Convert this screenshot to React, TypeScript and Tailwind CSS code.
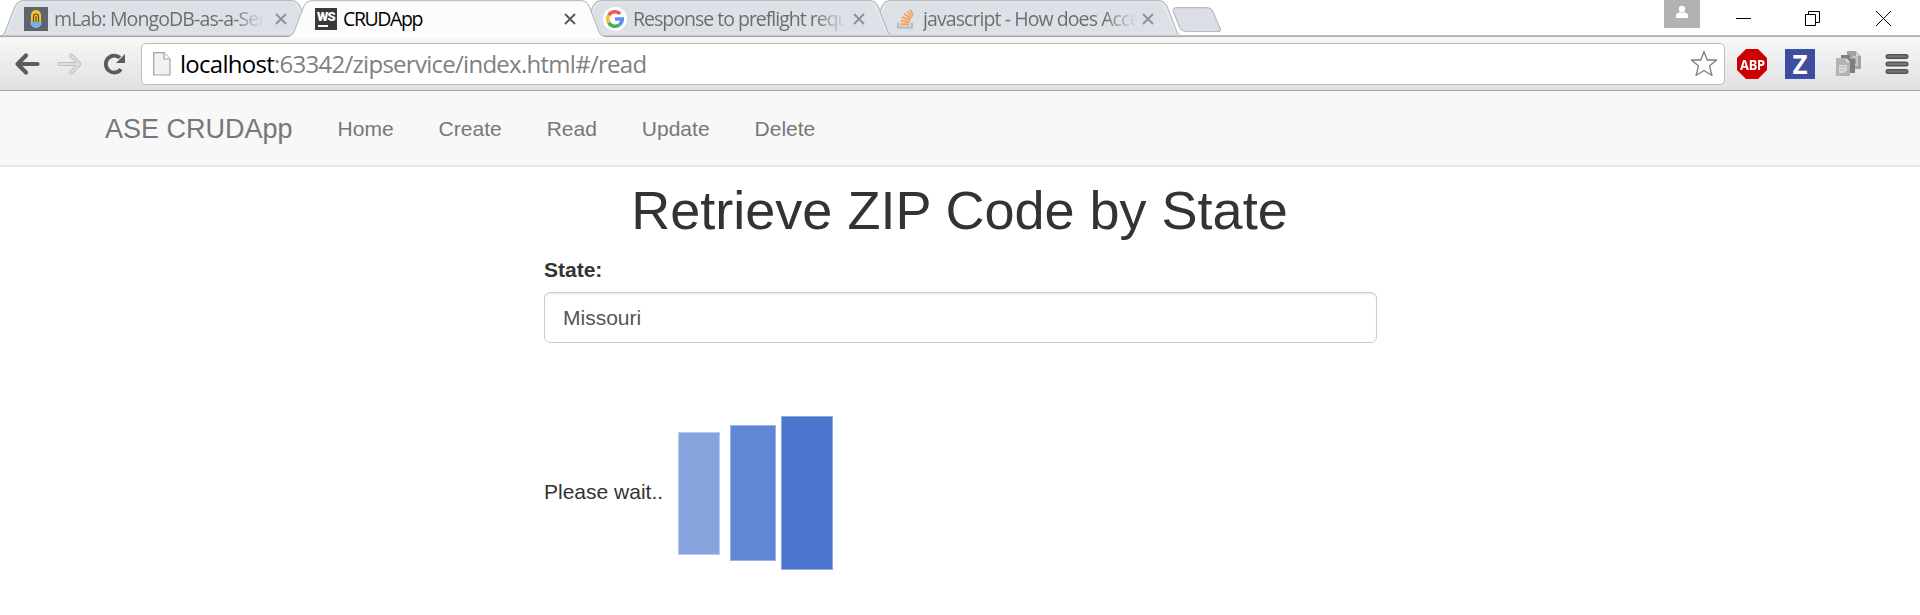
import React from "react";

type TabProps = {
  title: string;
  icon: React.ReactNode;
  active?: boolean;
  stack: string;
  titleClass: string;
  pad: string;
};

function Tab({ title, icon, active, stack, titleClass, pad }: TabProps) {
  return (
    <div className={`relative -mr-[27px] h-[38px] w-[316px] shrink-0 ${stack}`}>
      <svg className="absolute inset-0" width="316" height="38" viewBox="0 0 316 38" fill="none">
        <path
          d="M0 36.5 Q3 36 5 32 L15 6 Q17.500 .5 22 .5 H292 Q297.500 .5 300 6 L310 32 Q312 36.500 316 36.500 V38 H0Z"
          fill={active ? "#fcfcfc" : "#dce0e7"}
        />
        {!active && <path d="M4 35.500H311" stroke="#c3c6cc" />}
        {!active && <path d="M0 36.500H316" stroke="#a9abae" />}
        {!active && <path d="M0 37.500H316" stroke="#efefef" />}
        <path d="M7 32 L17 6.500 Q19 2 23 2 H292 Q296 2 298 7 L308 32" stroke={active ? "#ffffff" : "#eceef2"} />
        <path
          d="M0 36.500 Q3 36 5 32 L15 6 Q17.500 .7 22 .7 H292 Q297.500 .7 300 6 L310 32 Q312 36.500 316 36.500"
          stroke="#b2b4b8"
        />
      </svg>
      <div className={`relative flex h-[38px] items-center ${pad}`}>
        <div className="flex w-[31px] shrink-0 items-center">{icon}</div>
        <div
          className={`whitespace-nowrap text-[19.500px] ${titleClass} ${
            active ? "text-black" : "bg-[linear-gradient(to_right,#6b6b6b_84%,#dce0e7_99%)] bg-clip-text text-transparent"
          }`}
        >
          {title}
        </div>
      </div>
      <svg className="absolute left-[275px] top-[13px]" width="12" height="12" viewBox="0 0 12 12">
        <path d="M1 1L11 11M11 1L1 11" stroke={active ? "#555" : "#8d8f92"} strokeWidth="1.8" />
      </svg>
    </div>
  );
}

const MLabIcon = () => (
  <svg width="24" height="24" viewBox="0 0 24 24">
    <rect width="24" height="24" fill="#5d656e" />
    <path d="M7 16V8a5 5 0 0 1 10 0v8z" fill="#fbc334" />
    <path d="M9.500 16V9.500a2.500 2.500 0 0 1 5 0V16M12 9v7" fill="none" stroke="#5b4b2b" strokeWidth="1.200" />
    <path d="M6.500 15h11v3l-1.500 1v1h-2v1h-4v-1H8v-1l-1.500-1z" fill="#78aee0" />
  </svg>
);

const WebStormIcon = () => (
  <div className="flex h-[22px] w-[22px] flex-col items-start bg-[#3a3a3a]">
    <span className="h-[17px] self-center font-['Roboto',sans-serif] text-[13px] leading-[17px] font-black tracking-[-0.8px] text-white">
      WS
    </span>
    <span className="ml-[3px] h-[2px] w-[10px] bg-white" />
  </div>
);

const GoogleIcon = () => (
  <svg width="24" height="24" viewBox="0 0 24 24" fill="none" strokeWidth="3.500">
    <circle cx="12" cy="12" r="12" fill="#fff" />
    <path d="M17.300 6.900A7.300 7.300 0 0 0 5.700 8.400" stroke="#ea5a4d" />
    <path d="M5.700 8.400a7.300 7.300 0 0 0 0 7.200" stroke="#fbc02d" />
    <path d="M5.700 15.600A7.300 7.300 0 0 0 16.700 17.600" stroke="#43b05c" />
    <path d="M12 12h7.300a7.300 7.300 0 0 1-2.600 5.600" stroke="#5a8df5" />
  </svg>
);

const StackIcon = () => (
  <svg width="17" height="20" viewBox="0 0 17 20" fill="none">
    <path d="M1 13.500V18.500H15V13.500" stroke="#b6b9bd" strokeWidth="2" />
    <path d="M3.500 15.300H12.500M3.700 11.700L12.600 13M4.900 8.200L13 11.200M7.200 4.800L14 9.700M10.300 2.300L15 8.500M13.300 .8L16 6.500" stroke="#f5a15d" strokeWidth="1.900" />
  </svg>
);

function TabStrip() {
  return (
    <div className="flex h-[38px] w-full bg-[linear-gradient(to_bottom,#ffffff_0,#ffffff_35px,#bdbdbd_35px,#b0b0b0_37px,#f7f7f7_37px)]">
      <Tab title="mLab: MongoDB-as-a-Ser" icon={<MLabIcon />} stack="z-30" pad="pl-[24px]" titleClass="-ml-px tracking-[-0.88px]" />
      <Tab title="CRUDApp" icon={<WebStormIcon />} active stack="z-40" pad="pl-[26px]" titleClass="-ml-[3px] tracking-[-1.400px]" />
      <Tab title="Response to preflight requ" icon={<GoogleIcon />} stack="z-20" pad="pl-[25px]" titleClass="-ml-px tracking-[-1px]" />
      <Tab title="javascript - How does Acce" icon={<StackIcon />} stack="z-10" pad="pl-[30px]" titleClass="-ml-[5px] tracking-[-0.92px]" />
      <svg className="mt-[7px] ml-[16px] shrink-0" width="50" height="26" viewBox="0 0 50 26">
        <path d="M5 .7H34Q39 .7 41 5L48 21Q49.500 24.500 46 24.500H15Q10 24.500 8 21L1.500 5Q0 .7 5 .7Z" fill="#dbdfe5" stroke="#b9bbbf" strokeWidth="1.200" />
      </svg>
      <div className="ml-auto flex h-[35px] shrink-0">
        <svg width="36" height="28" viewBox="0 0 36 28">
          <rect width="36" height="28" fill="#b2b2b2" />
          <circle cx="18" cy="9" r="3.200" fill="#fff" />
          <path d="M12 18v-2q0-3.500 4-3.500h4q4 0 4 3.500v2z" fill="#fff" />
        </svg>
        <svg width="220" height="35" viewBox="0 0 220 35" fill="none" stroke="#000" strokeWidth="1">
          <path d="M36 18.500H51" />
          <path d="M105.500 14.500H115.500V25.500H105.500ZM108.500 14.500V11.500H119.500V22.500H115.500" />
          <path d="M176 11L191 26M191 11L176 26" />
        </svg>
      </div>
    </div>
  );
}

function Toolbar() {
  return (
    <div className="flex h-[53px] w-full items-start border-b border-[#a0a0a0] bg-[linear-gradient(to_bottom,#f7f7f7,#e1e1e1)] pt-[5px]">
      <svg width="141" height="42" viewBox="0 0 141 42" fill="none" strokeLinecap="round" strokeLinejoin="round">
        <path d="M37.500 21H18M26 12.500L17.500 21L26 29.500" stroke="#5c5c5c" strokeWidth="4.200" />
        <path d="M59.500 21H79M71 12.500L79.500 21L71 29.500" stroke="#c2c2c2" strokeWidth="4.200" />
        <path d="M59.500 21H79M71 12.500L79.500 21L71 29.500" stroke="#dedede" strokeWidth="2.200" />
        <path d="M121 26.300A8.500 8.500 0 1 1 120 14.700" stroke="#5c5c5c" strokeWidth="3.800" strokeLinecap="butt" />
        <path d="M125 11V20H116Z" fill="#5c5c5c" />
      </svg>
      <div className="flex h-[42px] w-[1584px] shrink-0 items-center rounded-[5px] border-[1.500px] border-[#bebebe] bg-white">
        <svg className="ml-[11px] shrink-0" width="18" height="24" viewBox="0 0 18 24">
          <path d="M.7 .7H11L17 7V23H.7Z" fill="#f1f1f1" stroke="#a1a1a1" strokeWidth="1.200" />
          <path d="M11 .7V7H17" fill="#fff" stroke="#a1a1a1" strokeWidth="1.200" />
        </svg>
        <div className="-mt-px ml-[9px] whitespace-nowrap text-[24px] leading-[36px] tracking-[-0.73px] text-[#808080]">
          <span className="text-black">localhost</span>:63342/zipservice/index.html#/read
        </div>
        <svg className="mr-[6px] ml-auto shrink-0" width="28" height="28" viewBox="0 0 28 28">
          <path d="M14 1.500L17.200 10H26.500L19.500 16L22 25.500L14 20.500L6 25.500L8.500 16L1.500 10H10.800Z" fill="#fff" stroke="#7d7d7d" strokeWidth="1.300" strokeLinejoin="round" />
        </svg>
      </div>
      <div className="flex h-[42px] items-center pl-[12px]">
        <div className="flex h-[30px] w-[30px] items-center justify-center bg-[#cc0000] font-['Noto_Sans',sans-serif] font-bold text-white [clip-path:polygon(30%_0,70%_0,100%_30%,100%_70%,70%_100%,30%_100%,0_70%,0_30%)]">
          <span className="scale-x-[0.86] text-[15px] tracking-[-0.3px]">ABP</span>
        </div>
        <div className="ml-[18px] flex h-[30px] w-[30px] items-center justify-center border border-[#3553b0] bg-[#3f4d9d] font-['Noto_Sans',sans-serif] text-[26px] leading-[28px] font-bold text-white">
          Z
        </div>
        <svg className="ml-[20px]" width="28" height="28" viewBox="0 0 28 28">
          <path d="M12 1H21L26 6V19H12Z" fill="#a3a3a3" />
          <path d="M21 1V6H26Z" fill="#d2d2d2" />
          <path d="M17 7H22V15H19" stroke="#c8c8c8" strokeWidth="1.800" fill="none" />
          <path d="M6 5H15L20 9V23H6Z" fill="#7e7e7e" />
          <path d="M15 5V9H20Z" fill="#aaa" />
          <path d="M1 8H11L15 12V26H1Z" fill="#b4b4b4" />
          <path d="M4 15H12V20L9 23H4Z" fill="#dadada" />
          <path d="M5 17H11M5 20H9" stroke="#b8b8b8" strokeWidth="1" />
          <path d="M11 8V12H15Z" fill="#ddd" />
        </svg>
        <svg className="ml-[22px]" width="24" height="22" viewBox="0 0 24 22" strokeLinecap="round">
          <path d="M3 3.500H21M3 11H21M3 18.500H21" stroke="#4e4e4e" strokeWidth="5" />
          <path d="M3 3.500H21M3 11H21M3 18.500H21" stroke="#747474" strokeWidth="2.500" />
        </svg>
      </div>
    </div>
  );
}

function Navbar() {
  return (
    <nav className="flex h-[76px] w-full items-center border-b-2 border-[#e7e7e7] bg-[#f8f8f8] pt-[2px] pl-[105px] text-[#777]">
      <a className="mr-[45px] text-[27px] leading-[30px]">ASE CRUDApp</a>
      <div className="flex gap-[45px] text-[21px] leading-[30px]">
        <a>Home</a>
        <a>Create</a>
        <a>Read</a>
        <a>Update</a>
        <a>Delete</a>
      </div>
    </nav>
  );
}

export default function App() {
  return (
    <div className="flex h-[615px] w-[1920px] flex-col overflow-hidden bg-white">
      <header className="font-['Open_Sans',sans-serif]">
        <TabStrip />
        <Toolbar />
      </header>
      <div className="flex flex-1 flex-col font-['Liberation_Sans',Arial,sans-serif] text-[21px] leading-[30px] text-[#333]">
        <Navbar />
        <main className="ml-[544px] flex w-[833px] flex-col">
          <h1 className="mt-[13px] pr-[2px] text-center text-[54px] leading-[60px]">Retrieve ZIP Code by State</h1>
          <label className="mt-[15px] font-bold">State:</label>
          <div className="mt-[7px] flex h-[51px] items-center rounded-[6px] border-[1.500px] border-[#ccc] pl-[18px] text-[#555] shadow-[inset_0_1.500px_1.500px_rgba(0,0,0,0.075)]">
            Missouri
          </div>
          <div className="mt-[73px] flex h-[154px] items-center">
            <span className="-mt-[2px] w-[134px] whitespace-nowrap">Please wait..</span>
            <div className="h-[123px] w-[42px] border border-[#b9caee] bg-[#87a4de]" />
            <div className="ml-[10px] h-[136px] w-[46px] border border-[#9db4e6] bg-[#5f87d4]" />
            <div className="ml-[5px] h-[154px] w-[52px] border border-[#8eaae4] bg-[#4a77cd]" />
          </div>
        </main>
      </div>
    </div>
  );
}
